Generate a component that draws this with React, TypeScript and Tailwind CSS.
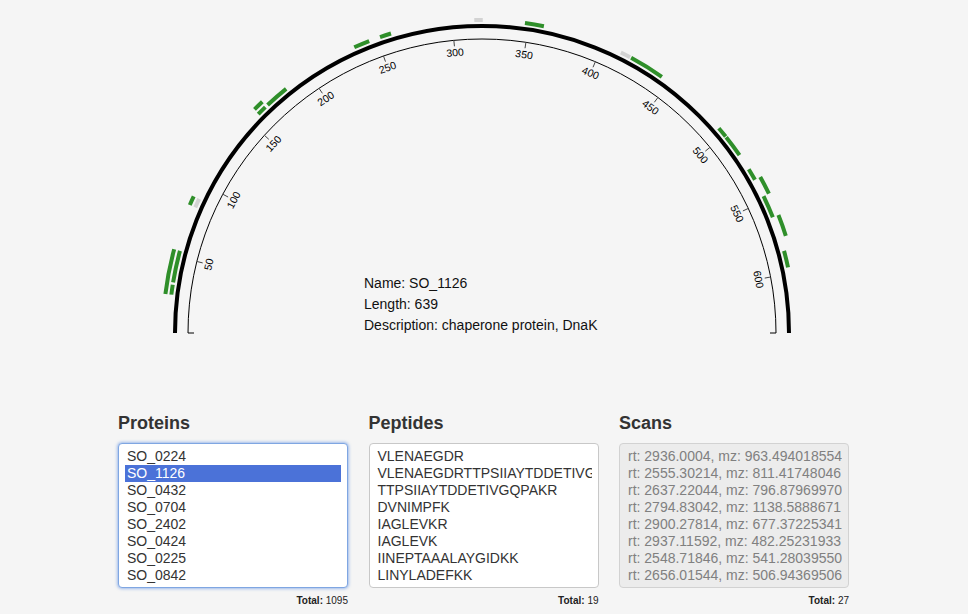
import React from "react";

const CX = 482;
const CY = 333;
const LEN = 639;

type Seg = [number, number, "g" | "y"];

const lane1: Seg[] = [
  [25, 31.5, "g"],
  [33, 54, "g"],
  [84, 90, "y"],
  [157.5, 164, "g"],
  [166, 182, "g"],
  [234, 244.5, "g"],
  [252, 259.5, "g"],
  [314.5, 320, "y"],
  [347.5, 360, "g"],
  [413, 419.7, "y"],
  [420.5, 444, "g"],
  [494, 501, "g"],
  [501.5, 516, "g"],
  [527, 535, "g"],
  [547, 562, "g"],
  [585, 596, "g"],
];

const lane2: Seg[] = [
  [25, 54, "g"],
  [84, 90, "g"],
  [158, 165, "g"],
  [535, 547, "g"],
  [562, 576, "g"],
];

const proteins = ["SO_0224", "SO_1126", "SO_0432", "SO_0704", "SO_2402", "SO_0424", "SO_0225", "SO_0842"];
const peptides = [
  "VLENAEGDR",
  "VLENAEGDRTTPSIIAYTDDETIVGQPAKR",
  "TTPSIIAYTDDETIVGQPAKR",
  "DVNIMPFK",
  "IAGLEVKR",
  "IAGLEVK",
  "IINEPTAAALAYGIDKK",
  "LINYLADEFKK",
];
const scans = [
  "rt: 2936.0004, mz: 963.494018554",
  "rt: 2555.30214, mz: 811.41748046",
  "rt: 2637.22044, mz: 796.87969970",
  "rt: 2794.83042, mz: 1138.5888671",
  "rt: 2900.27814, mz: 677.37225341",
  "rt: 2937.11592, mz: 482.25231933",
  "rt: 2548.71846, mz: 541.28039550",
  "rt: 2656.01544, mz: 506.94369506",
];

const pt = (p: number, r: number) => {
  const a = Math.PI * (1 - p / LEN);
  return [CX + r * Math.cos(a), CY - r * Math.sin(a)];
};

const arc = (p1: number, p2: number, r: number) => {
  const [x1, y1] = pt(p1, r);
  const [x2, y2] = pt(p2, r);
  return `M ${x1} ${y1} A ${r} ${r} 0 0 1 ${x2} ${y2}`;
};

const ProteinMap = () => {
  const ticks = Array.from({ length: 12 }, (_, i) => (i + 1) * 50);
  return (
    <svg width="968" height="340" className="block" style={{ fontFamily: "'Liberation Sans', Arial, sans-serif" }}>
      <path d={arc(0, LEN, 307)} fill="none" stroke="#000" strokeWidth={4} />
      <path
        d={`M ${CX - 288} ${CY} L ${CX - 294} ${CY} A 294 294 0 0 1 ${CX + 294} ${CY} L ${CX + 288} ${CY}`}
        fill="none"
        stroke="#000"
        strokeWidth={1}
      />
      {ticks.map((t) => {
        const [x1, y1] = pt(t, 294);
        const [x2, y2] = pt(t, 288);
        const [lx, ly] = pt(t, 282);
        const rot = (t / LEN) * 180 - 90;
        return (
          <g key={t}>
            <line x1={x1} y1={y1} x2={x2} y2={y2} stroke="#444" strokeWidth={1} />
            <text
              x={lx}
              y={ly}
              fontSize="10.5"
              textAnchor="middle"
              dominantBaseline="central"
              transform={`rotate(${rot} ${lx} ${ly})`}
              fill="#000"
            >
              {t}
            </text>
          </g>
        );
      })}
      {lane1.map(([a, b, c], i) => (
        <path key={`a${i}`} d={arc(a, b, 313)} fill="none" stroke={c === "g" ? "#2f8f2a" : "#d3d3d3"} strokeWidth={4} />
      ))}
      {lane2.map(([a, b, c], i) => (
        <path key={`b${i}`} d={arc(a, b, 319)} fill="none" stroke={c === "g" ? "#2f8f2a" : "#d3d3d3"} strokeWidth={4} />
      ))}
      <g fontSize="14" fill="#111">
        <text x="364" y="288">Name: SO_1126</text>
        <text x="364" y="309">Length: 639</text>
        <text x="364" y="330">Description: chaperone protein, DnaK</text>
      </g>
    </svg>
  );
};

type ListProps = {
  title: string;
  items: string[];
  total: number;
  selected?: number;
  focused?: boolean;
  disabled?: boolean;
};

const ListBox = (props: ListProps) => {
  const { title, items, total, selected, focused, disabled } = props;
  let box = "border-[#c8c8c8] bg-white text-[#333]";
  if (focused) box = "border-[#7fa6e2] bg-white text-[#333] shadow-[0_0_3px_1px_rgba(90,140,225,0.55)]";
  if (disabled) box = "border-[#d2d2d2] bg-[#ececec] text-[#808080]";
  return (
    <div className="w-[230px] shrink-0">
      <h2 className="text-[18px] leading-[20px] font-bold text-[#333] mb-[10px]">{title}</h2>
      <div className={`h-[145px] border rounded-[4px] px-[6px] pt-[4px] overflow-hidden ${box}`}>
        {items.map((it, i) => (
          <div
            key={i}
            className={`h-[17px] leading-[17px] text-[14px] px-[2px] whitespace-nowrap overflow-hidden ${
              i === selected ? "bg-[#4b72d8] text-white" : ""
            }`}
          >
            {it}
          </div>
        ))}
      </div>
      <div className="text-right text-[10px] leading-[12px] mt-[7px] text-[#222]">
        <span className="font-bold">Total:</span> {total}
      </div>
    </div>
  );
}

export default function App() {
  return (
    <div className="w-[968px] h-[614px] bg-[#f5f5f5] overflow-hidden" style={{ fontFamily: "'Liberation Sans', Arial, sans-serif" }}>
      <ProteinMap />
      <div className="flex gap-[20.5px] pl-[118px] mt-[73px]">
        <ListBox title="Proteins" items={proteins} total={1095} selected={1} focused />
        <ListBox title="Peptides" items={peptides} total={19} />
        <ListBox title="Scans" items={scans} total={27} disabled />
      </div>
    </div>
  );
}
